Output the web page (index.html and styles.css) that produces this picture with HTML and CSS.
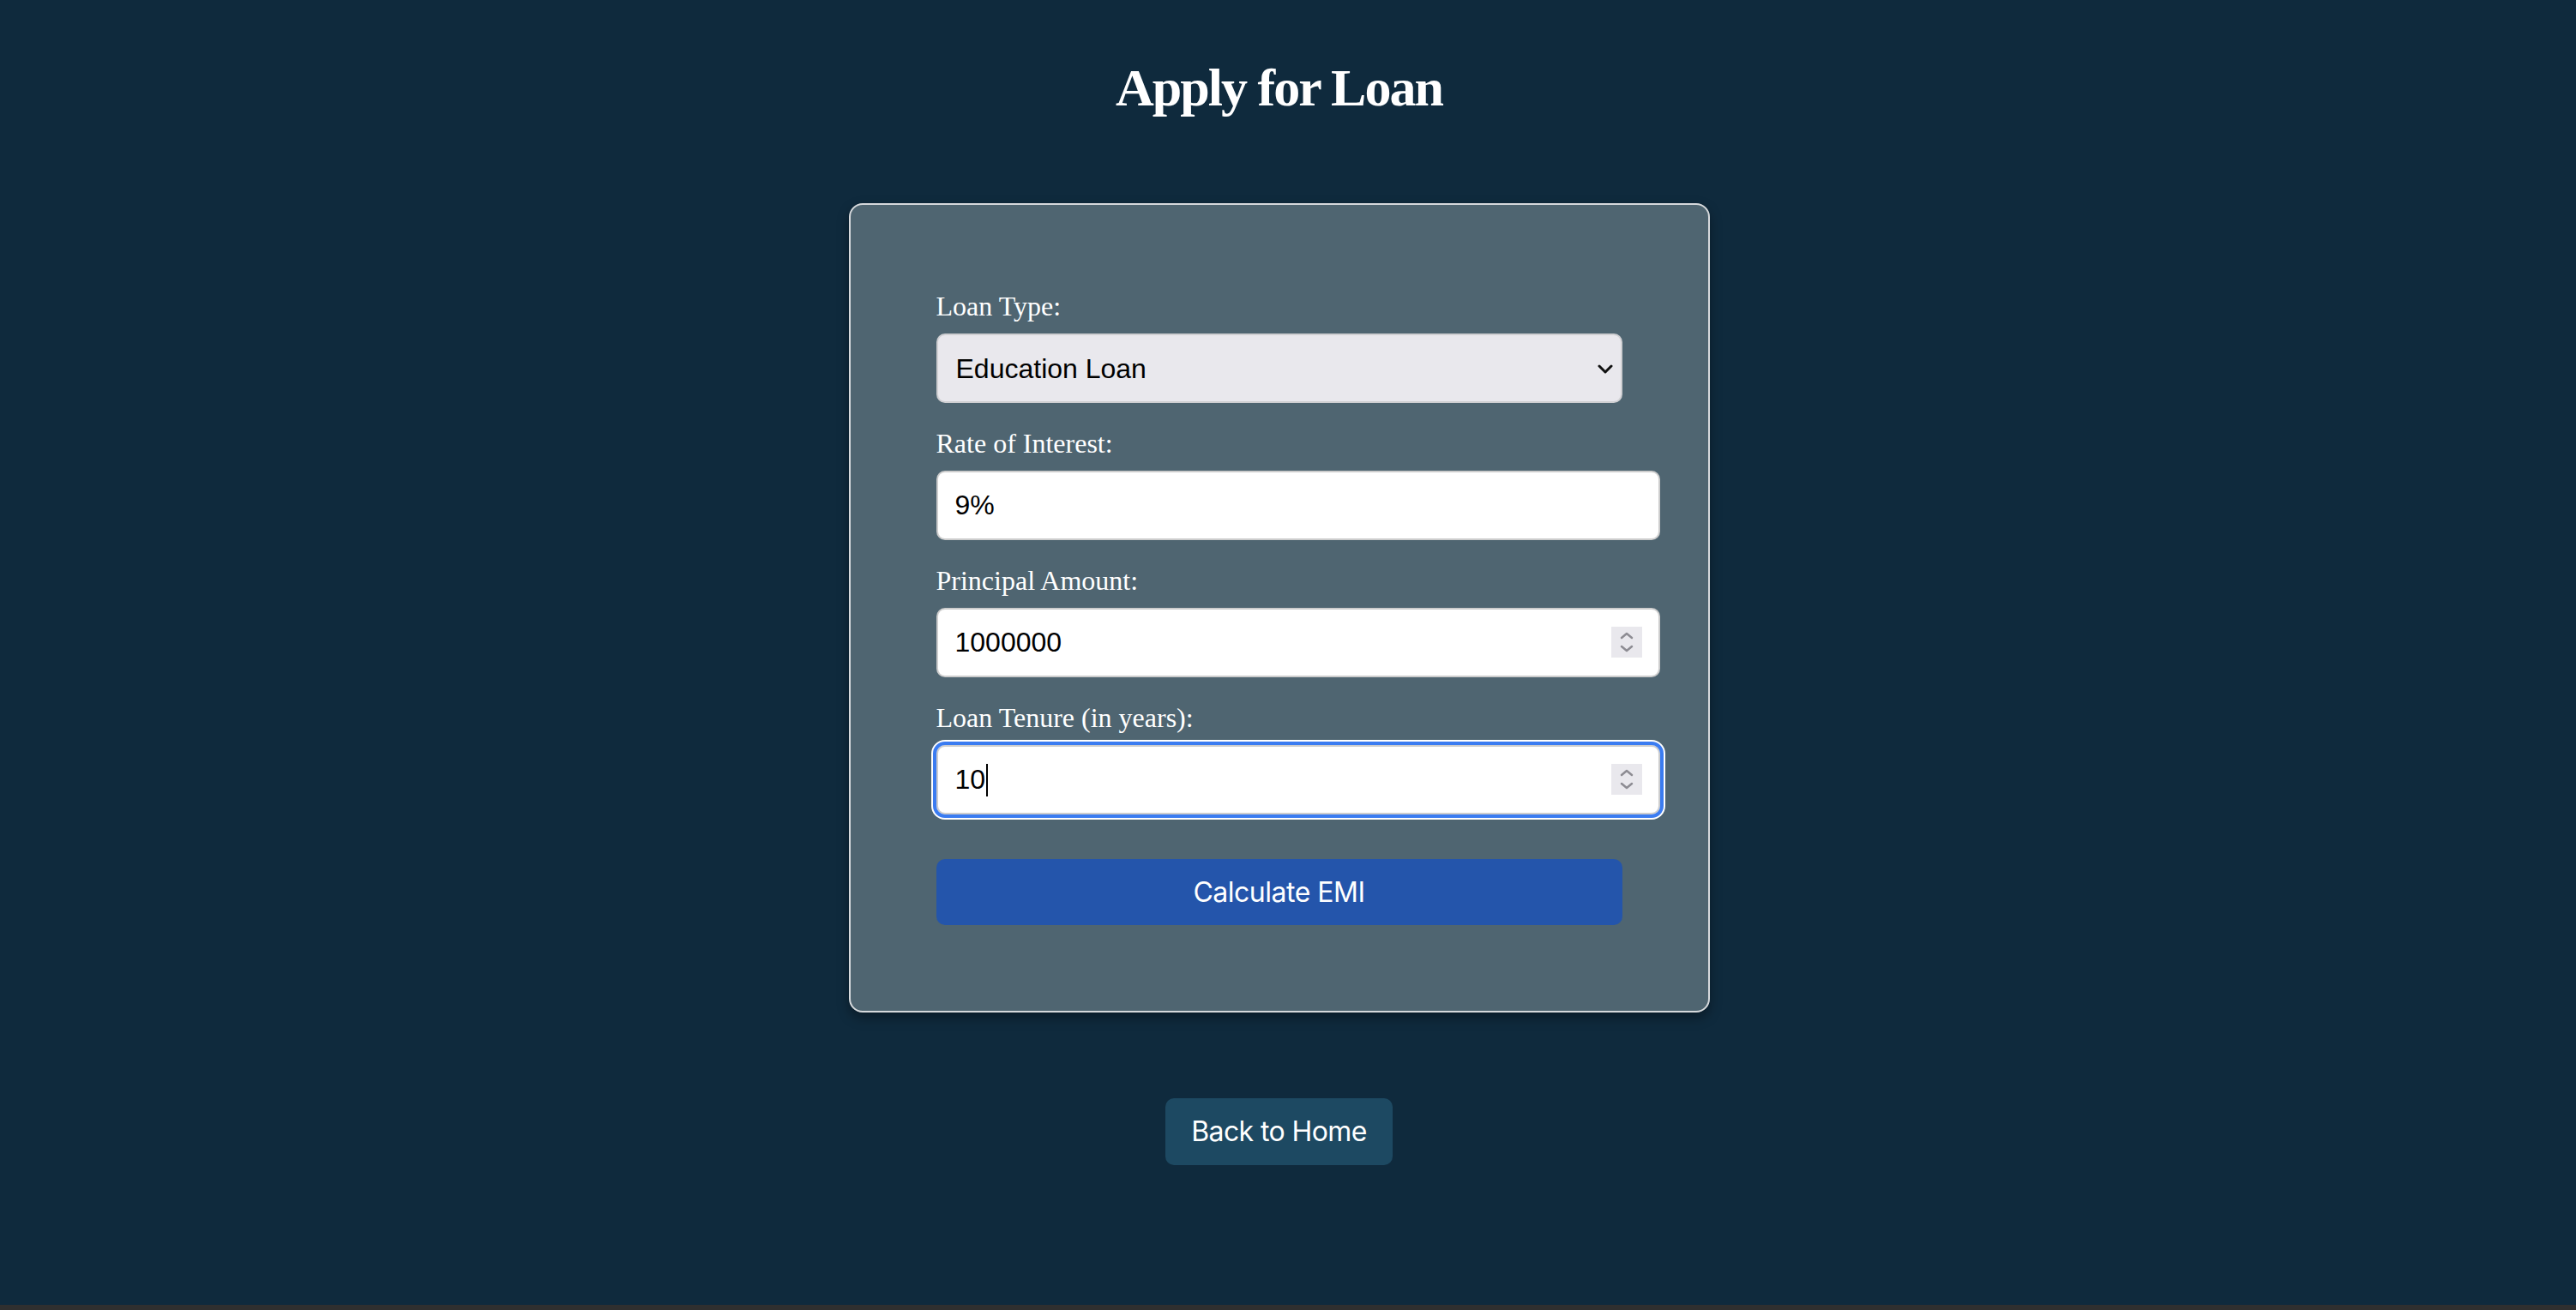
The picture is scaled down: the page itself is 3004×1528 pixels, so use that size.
FILE: index.html
```html
<!DOCTYPE html>
<html lang="en">
<head>
<meta charset="utf-8">
<title>Apply for Loan</title>
<link rel="stylesheet" href="styles.css">
</head>
<body>
<main class="page">
  <h1 class="title">Apply for Loan</h1>
  <form class="card">
    <label class="label" for="loanType">Loan Type:</label>
    <div class="field">
      <select id="loanType" class="select">
        <option>Education Loan</option>
        <option>Home Loan</option>
        <option>Car Loan</option>
        <option>Personal Loan</option>
      </select>
      <svg class="select-arrow" width="18" height="11" viewBox="0 0 18 11" aria-hidden="true"><path d="M2 2 L9 9 L16 2" fill="none" stroke="#111" stroke-width="3" stroke-linecap="round" stroke-linejoin="round"/></svg>
    </div>

    <label class="label" for="rate">Rate of Interest:</label>
    <div class="field">
      <input id="rate" class="input" type="text" value="9%">
    </div>

    <label class="label" for="principal">Principal Amount:</label>
    <div class="field">
      <input id="principal" class="input" type="text" value="1000000">
      <span class="spinner" aria-hidden="true">
        <svg width="36" height="36" viewBox="0 0 36 36"><path d="M12 13 L18 8 L24 13" fill="none" stroke="#8d8c93" stroke-width="2.5" stroke-linecap="round" stroke-linejoin="round"/><path d="M12 23 L18 28 L24 23" fill="none" stroke="#8d8c93" stroke-width="2.5" stroke-linecap="round" stroke-linejoin="round"/></svg>
      </span>
    </div>

    <label class="label" for="tenure">Loan Tenure (in years):</label>
    <div class="field">
      <input id="tenure" class="input focused" type="text" value="10">
      <span class="caret" aria-hidden="true"></span>
      <span class="spinner" aria-hidden="true">
        <svg width="36" height="36" viewBox="0 0 36 36"><path d="M12 13 L18 8 L24 13" fill="none" stroke="#8d8c93" stroke-width="2.5" stroke-linecap="round" stroke-linejoin="round"/><path d="M12 23 L18 28 L24 23" fill="none" stroke="#8d8c93" stroke-width="2.5" stroke-linecap="round" stroke-linejoin="round"/></svg>
      </span>
    </div>

    <button type="button" class="calc">Calculate EMI</button>
  </form>
  <a class="back" href="#">Back to Home</a>
</main>
</body>
</html>
```

FILE: styles.css
```css
html {
  background: #2f2f2f;
}

body {
  margin: 0;
  height: 1522px;
  background: #0f2a3d;
  color: #ffffff;
  font-family: "Liberation Serif", "Times New Roman", serif;
}

.page {
  display: flex;
  flex-direction: column;
  align-items: center;
  padding: 65px 21px 0 0;
}

.title {
  margin: 0;
  font-size: 62px;
  line-height: 74px;
  font-weight: bold;
  letter-spacing: -2px;
}

.card {
  margin-top: 98px;
  width: 800px;
  padding: 100px;
  border: 2px solid #d6d9dc;
  border-radius: 16px;
  background: #4f6571;
  box-shadow: 0 6px 14px rgba(0, 0, 0, 0.35);
}

.label {
  display: block;
  font-size: 32px;
  line-height: 37px;
  margin-bottom: 13px;
}

.field {
  position: relative;
  width: fit-content;
  margin-bottom: 29px;
}

.select {
  display: block;
  box-sizing: border-box;
  width: 800px;
  height: 81px;
  margin: 0;
  padding: 0 60px 0 21px;
  -webkit-appearance: none;
  appearance: none;
  background: #e9e8ed;
  color: #000;
  border: 2px solid #cfcfd2;
  border-radius: 10px;
  font-family: "Liberation Sans", Arial, sans-serif;
  font-size: 32px;
}

.select-arrow {
  position: absolute;
  right: 11px;
  top: 36px;
}

.input {
  display: block;
  box-sizing: content-box;
  width: 800px;
  margin: 0;
  padding: 20px;
  background: #ffffff;
  color: #000;
  border: 2px solid #cdcdcd;
  border-radius: 10px;
  font-family: "Liberation Sans", Arial, sans-serif;
  font-size: 32px;
  line-height: 37px;
  height: 37px;
}

.input.focused {
  outline: 4px solid #3b7cf1;
  outline-offset: 0;
  box-shadow: 0 0 0 6px #ffffff;
}

.caret {
  position: absolute;
  left: 58px;
  top: 22px;
  width: 2px;
  height: 38px;
  background: #000;
}

.spinner {
  position: absolute;
  right: 21px;
  top: 22px;
  width: 36px;
  height: 36px;
  background: #e9e8ed;
  display: flex;
}

.calc {
  display: block;
  width: 800px;
  margin-top: 52px;
  padding: 19px 0;
  border: none;
  border-radius: 10px;
  background: #2455ab;
  color: #ffffff;
  font-family: Inter, "Liberation Sans", sans-serif;
  font-size: 32px;
  line-height: 39px;
  letter-spacing: -0.5px;
}

.back {
  margin-top: 100px;
  padding: 20px 30px;
  border-radius: 10px;
  background: #1d4962;
  color: #ffffff;
  text-decoration: none;
  font-family: Inter, "Liberation Sans", sans-serif;
  font-size: 32px;
  line-height: 38px;
  letter-spacing: -0.6px;
}
```
